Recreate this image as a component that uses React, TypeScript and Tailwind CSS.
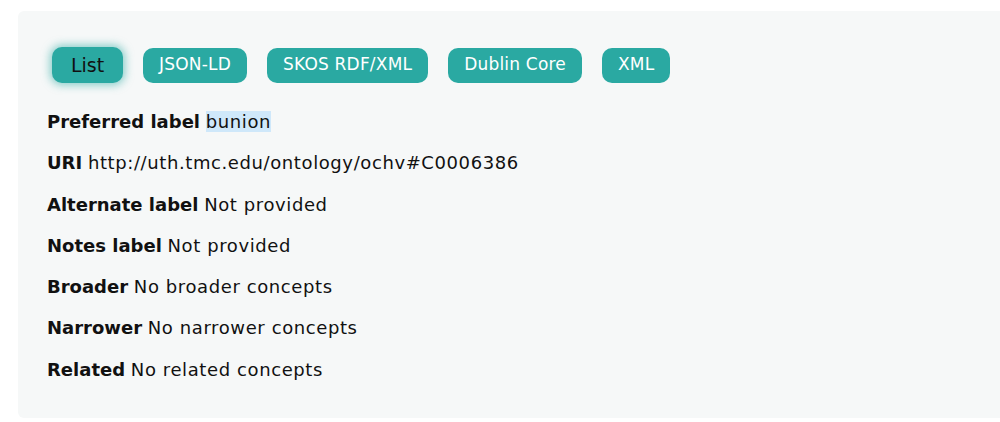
const formats = ["JSON-LD", "SKOS RDF/XML", "Dublin Core", "XML"];

const rows: { label: string; value: string }[] = [
  { label: "URI", value: "http://uth.tmc.edu/ontology/ochv#C0006386" },
  { label: "Alternate label", value: "Not provided" },
  { label: "Notes label", value: "Not provided" },
  { label: "Broader", value: "No broader concepts" },
  { label: "Narrower", value: "No narrower concepts" },
  { label: "Related", value: "No related concepts" },
];

export default function App() {
  return (
    <div className="w-[1000px] h-[422px] bg-white overflow-hidden font-['DejaVu_Sans',sans-serif]">
      <div className="ml-[18px] mt-[11px] w-[1000px] h-[407px] rounded-md bg-[#f6f8f8] pl-[29px] pt-[36px]">
        <div className="flex items-center gap-[20px] pl-[5px]">
          <button className="h-[36px] w-[71px] rounded-[10px] bg-[#2aa9a2] text-[19px] text-[#111] shadow-[0_0_8px_2px_rgba(42,169,162,0.55)]">
            List
          </button>
          {formats.map((f) => (
            <button
              key={f}
              className="h-[35px] px-[16px] rounded-[10px] bg-[#2aa9a2] text-[17px] tracking-[0.2px] text-white"
            >
              {f}
            </button>
          ))}
        </div>

        <div className="mt-[28px] flex flex-col gap-[19px] text-[18px] leading-[22.3px] text-[#111]">
          <p>
            <b>Preferred label</b>{" "}
            <span className="bg-[#cfe8fa] tracking-[0.6px]">bunion</span>
          </p>
          {rows.map((r) => (
            <p key={r.label}>
              <b>{r.label}</b> <span className="tracking-[0.6px]">{r.value}</span>
            </p>
          ))}
        </div>
      </div>
    </div>
  );
}
